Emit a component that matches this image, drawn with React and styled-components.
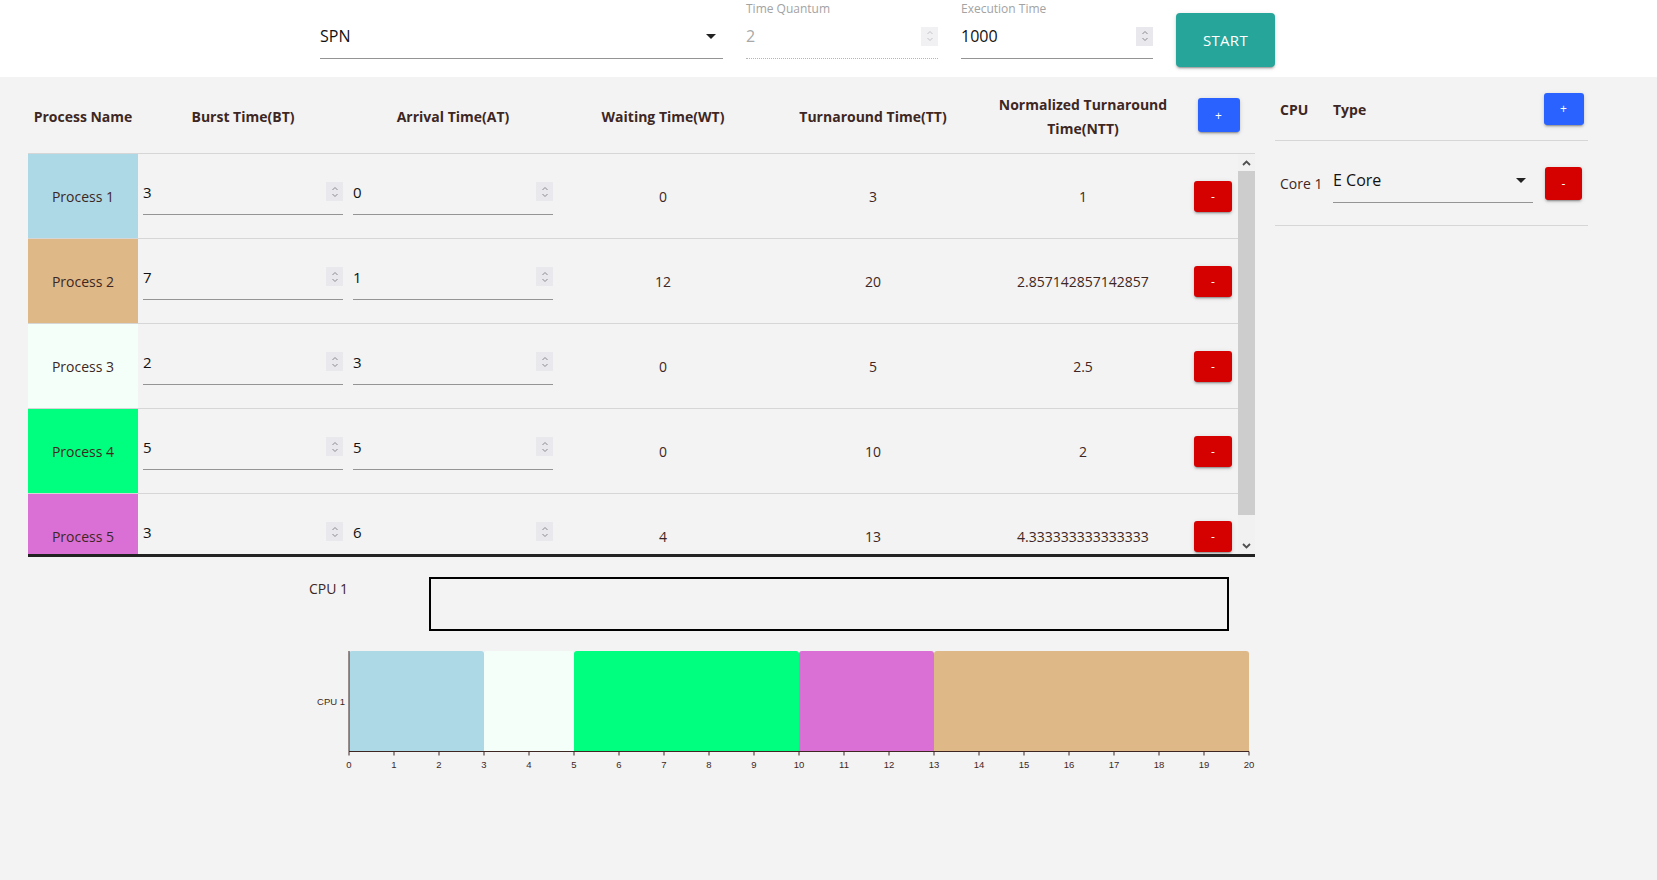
import React from "react";
import styled, { createGlobalStyle } from "styled-components";

const GlobalStyle = createGlobalStyle`
  * { box-sizing: border-box; }
  html, body { margin: 0; padding: 0; }
  body {
    background: #f3f3f3;
    font-family: "Open Sans", "Noto Sans", sans-serif;
    color: #3e2723;
    min-height: 100vh;
  }
  input { font-family: inherit; }
  input[type="number"]::-webkit-inner-spin-button,
  input[type="number"]::-webkit-outer-spin-button {
    -webkit-appearance: none;
    margin: 0;
  }
`;

const processes = [
  { name: "Process 1", color: "#add8e6", bt: 3, at: 0, wt: 0, tt: 3, ntt: "1" },
  { name: "Process 2", color: "#deb887", bt: 7, at: 1, wt: 12, tt: 20, ntt: "2.857142857142857" },
  { name: "Process 3", color: "#f5fffa", bt: 2, at: 3, wt: 0, tt: 5, ntt: "2.5" },
  { name: "Process 4", color: "#00ff7f", bt: 5, at: 5, wt: 0, tt: 10, ntt: "2" },
  { name: "Process 5", color: "#da70d6", bt: 3, at: 6, wt: 4, tt: 13, ntt: "4.333333333333333" },
];

const schedule = [
  { start: 0, end: 3, color: "#add8e6" },
  { start: 3, end: 5, color: "#f5fffa" },
  { start: 5, end: 10, color: "#00ff7f" },
  { start: 10, end: 13, color: "#da70d6" },
  { start: 13, end: 20, color: "#deb887" },
];

const ROW_H = 85;
const VIEW_H = 400;
const ARROW_H = 17;

/* ---------- top bar ---------- */

const TopBar = styled.div`
  display: flex;
  align-items: flex-start;
  gap: 23px;
  height: 77px;
  padding-left: 320px;
  background: #fff;
`;

const Field = styled.div`
  width: ${(p) => p.$width}px;
  flex: none;
`;

const FieldLabel = styled.div`
  height: 17px;
  font-size: 12px;
  line-height: 17px;
  color: #a3a3a3;
`;

const InputRow = styled.div`
  display: flex;
  align-items: center;
  height: 35px;
  margin-top: ${(p) => p.$offset || 0}px;
  padding-bottom: 10px;
  border-bottom: 1px ${(p) => (p.$disabled ? "dotted #b5b5b5" : "solid #949494")};
`;

const TextInput = styled.input`
  flex: 1;
  min-width: 0;
  height: 24px;
  border: none;
  outline: none;
  background: transparent;
  padding: 0;
  font-size: ${(p) => p.$size || 16}px;
  color: ${(p) => (p.disabled ? "#a8a8a8" : "#111")};
`;

const SelectText = styled.div`
  flex: 1;
  font-size: 16px;
  line-height: 24px;
  color: #111;
`;

const SpinBox = styled.div`
  flex: none;
  width: 17px;
  height: 19px;
  display: flex;
  align-items: center;
  justify-content: center;
  background: ${(p) => (p.$disabled ? "#f1f1f4" : "#e9e9ed")};
`;

const StartButton = styled.button`
  flex: none;
  margin-top: 13px;
  width: 99px;
  height: 54px;
  border: none;
  border-radius: 4px;
  background: #26a69a;
  color: #fff;
  font-family: inherit;
  font-size: 15px;
  letter-spacing: 0.3px;
  box-shadow: 0 3px 1px -2px rgba(0, 0, 0, 0.2), 0 2px 2px 0 rgba(0, 0, 0, 0.14),
    0 1px 5px 0 rgba(0, 0, 0, 0.12);
`;

/* ---------- main ---------- */

const Main = styled.div`
  display: flex;
  align-items: flex-start;
  gap: 20px;
  padding-left: 28px;
`;

const LeftColumn = styled.div`
  width: 1227px;
  flex: none;
`;

const HeadGrid = styled.div`
  display: grid;
  grid-template-columns: 110px 210px 210px 210px 210px 210px 1fr;
  align-items: center;
  height: 77px;
  border-bottom: 1px solid #d6d6d6;
`;

const HeadCell = styled.div`
  display: flex;
  justify-content: center;
  padding-top: ${(p) => (p.$button ? 0 : 3)}px;
  padding-right: ${(p) => (p.$button ? 6 : 0)}px;
  text-align: center;
  font-size: 14px;
  font-weight: 700;
  line-height: 23.5px;
`;

const BodyFrame = styled.div`
  display: flex;
  height: ${VIEW_H + 3}px;
  border-bottom: 3px solid #222;
`;

const RowsViewport = styled.div`
  flex: 1;
  height: ${VIEW_H}px;
  overflow: hidden;
`;

const Row = styled.div`
  display: grid;
  grid-template-columns: 110px 210px 210px 210px 210px 210px 50px;
  align-items: center;
  height: ${ROW_H}px;
  border-bottom: 1px solid #d6d6d6;
`;

const NameCell = styled.div`
  align-self: stretch;
  display: flex;
  align-items: center;
  justify-content: center;
  background: ${(p) => p.$color};
  font-size: 14px;
`;

const InputCell = styled.div`
  padding: 2px 5px 0;
`;

const ValueCell = styled.div`
  text-align: center;
  font-size: 14px;
`;

const ActionCell = styled.div`
  display: flex;
  justify-content: center;
  padding-left: ${(p) => p.$pl || 0}px;
`;

const ActionButton = styled.button`
  width: ${(p) => p.$w || 38}px;
  height: ${(p) => p.$h || 31}px;
  padding: 0;
  border: none;
  border-radius: 3px;
  background: ${(p) => (p.$add ? "#2962ff" : "#d50000")};
  color: #fff;
  font-family: inherit;
  font-size: 12px;
  box-shadow: 0 3px 1px -2px rgba(0, 0, 0, 0.2), 0 2px 2px 0 rgba(0, 0, 0, 0.14),
    0 1px 5px 0 rgba(0, 0, 0, 0.12);
`;

const Scrollbar = styled.div`
  width: 17px;
  height: ${VIEW_H}px;
  display: flex;
  flex-direction: column;
  background: #f1f1f1;
`;

const ScrollArrow = styled.div`
  height: ${ARROW_H}px;
  display: flex;
  align-items: center;
  justify-content: center;
  flex: none;
`;

const ScrollThumb = styled.div`
  flex: none;
  background: #cdcdcd;
`;

const ScrollGap = styled.div`
  flex: 1;
`;

/* ---------- queue + chart ---------- */

const QueueRow = styled.div`
  display: flex;
  align-items: flex-start;
  margin-top: 20px;
  padding-left: 281px;
`;

const QueueLabel = styled.div`
  width: 120px;
  margin-top: 2px;
  font-size: 14px;
  line-height: 20px;
`;

const QueueBox = styled.div`
  width: 800px;
  height: 54px;
  border: 2px solid #000;
`;

const ChartWrap = styled.div`
  margin: 14px 0 0 272px;
  width: 960px;
  height: 132px;
`;

/* ---------- cpu panel ---------- */

const CpuPanel = styled.div`
  width: 313px;
  flex: none;
`;

const CpuGrid = styled.div`
  display: grid;
  grid-template-columns: 58px 200px 1fr;
  align-items: center;
  height: ${(p) => (p.$head ? 64 : 85)}px;
  border-bottom: 1px solid #d6d6d6;
`;

const CpuHeadText = styled.div`
  padding-top: 2px;
  padding-left: ${(p) => (p.$first ? 5 : 0)}px;
  font-size: 14px;
  font-weight: 700;
`;

const CoreName = styled.div`
  padding-left: 5px;
  font-size: 14px;
`;

const CpuSelect = styled.div`
  margin-top: 4px;
`;

/* ---------- drawings ---------- */

function Spinner({ disabled }) {
  const c = disabled ? "#c4c4c8" : "#8a8a8f";
  return (
    <SpinBox $disabled={disabled}>
      <svg width="8" height="14" viewBox="0 0 8 14">
        <path d="M1.5 5 L4 2.5 L6.5 5 M1.5 9 L4 11.5 L6.5 9" fill="none" stroke={c} strokeWidth="1" />
      </svg>
    </SpinBox>
  );
}

function Caret() {
  return (
    <svg width="24" height="24" viewBox="0 0 24 24">
      <path d="M7 10l5 5 5-5z" fill="#222" />
    </svg>
  );
}

function Chevron({ up }) {
  return (
    <svg width="9" height="6" viewBox="0 0 9 6">
      <path
        d={up ? "M1 5 L4.5 1.5 L8 5" : "M1 1 L4.5 4.5 L8 1"}
        fill="none"
        stroke="#505050"
        strokeWidth="1.8"
      />
    </svg>
  );
}

function NumberField({ value, size, disabled }) {
  return (
    <InputRow $disabled={disabled}>
      <TextInput type="number" defaultValue={value} $size={size} disabled={disabled} />
      <Spinner disabled={disabled} />
    </InputRow>
  );
}

function GanttChart() {
  const x0 = 49;
  const unit = 45;
  const top = 6;
  const base = 106.5;
  const r = 3;
  const font = "Liberation Sans, Arial, sans-serif";
  return (
    <svg width="960" height="132" viewBox="0 0 960 132">
      {schedule.map((s) => {
        const x = x0 + s.start * unit;
        const w = (s.end - s.start) * unit;
        const d = `M${x} ${base} V${top + r} Q${x} ${top} ${x + r} ${top} H${x + w - r} Q${x + w} ${top} ${x + w} ${top + r} V${base} Z`;
        return <path key={s.start} d={d} fill={s.color} />;
      })}
      <line x1={x0} y1={top} x2={x0} y2={base} stroke="#3e2723" strokeWidth="1" />
      <line x1={x0} y1={base} x2={x0 + 20 * unit} y2={base} stroke="#3e2723" strokeWidth="1" />
      <text x="45" y="57" textAnchor="end" dominantBaseline="middle" fontSize="9.5" fill="#3e2723" fontFamily={font}>
        CPU 1
      </text>
      {Array.from({ length: 21 }, (_, i) => (
        <g key={i}>
          <line x1={x0 + i * unit} y1={base} x2={x0 + i * unit} y2={base + 4} stroke="#3e2723" strokeWidth="1" />
          <text
            x={x0 + i * unit}
            y="120"
            textAnchor="middle"
            dominantBaseline="middle"
            fontSize="9.5"
            fill="#3e2723"
            fontFamily={font}
          >
            {i}
          </text>
        </g>
      ))}
    </svg>
  );
}

export default function App() {
  const track = VIEW_H - ARROW_H * 2;
  const thumb = Math.round((track * VIEW_H) / (processes.length * ROW_H));

  return (
    <>
      <GlobalStyle />
      <TopBar>
        <Field $width={403}>
          <FieldLabel />
          <InputRow $offset={7}>
            <SelectText>SPN</SelectText>
            <Caret />
          </InputRow>
        </Field>
        <Field $width={192}>
          <FieldLabel>Time Quantum</FieldLabel>
          <InputRow $offset={7} $disabled>
            <TextInput type="number" defaultValue={2} disabled />
            <Spinner disabled />
          </InputRow>
        </Field>
        <Field $width={192}>
          <FieldLabel>Execution Time</FieldLabel>
          <InputRow $offset={7}>
            <TextInput type="number" defaultValue={1000} />
            <Spinner />
          </InputRow>
        </Field>
        <StartButton>START</StartButton>
      </TopBar>

      <Main>
        <LeftColumn>
          <HeadGrid>
            <HeadCell>Process Name</HeadCell>
            <HeadCell>Burst Time(BT)</HeadCell>
            <HeadCell>Arrival Time(AT)</HeadCell>
            <HeadCell>Waiting Time(WT)</HeadCell>
            <HeadCell>Turnaround Time(TT)</HeadCell>
            <HeadCell>
              Normalized Turnaround
              <br />
              Time(NTT)
            </HeadCell>
            <HeadCell $button>
              <ActionButton $add $w={42} $h={34}>+</ActionButton>
            </HeadCell>
          </HeadGrid>

          <BodyFrame>
            <RowsViewport>
              {processes.map((p) => (
                <Row key={p.name}>
                  <NameCell $color={p.color}>{p.name}</NameCell>
                  <InputCell>
                    <NumberField value={p.bt} size={15} />
                  </InputCell>
                  <InputCell>
                    <NumberField value={p.at} size={15} />
                  </InputCell>
                  <ValueCell>{p.wt}</ValueCell>
                  <ValueCell>{p.tt}</ValueCell>
                  <ValueCell>{p.ntt}</ValueCell>
                  <ActionCell>
                    <ActionButton>-</ActionButton>
                  </ActionCell>
                </Row>
              ))}
            </RowsViewport>
            <Scrollbar>
              <ScrollArrow>
                <Chevron up />
              </ScrollArrow>
              <ScrollThumb style={{ height: thumb }} />
              <ScrollGap />
              <ScrollArrow>
                <Chevron />
              </ScrollArrow>
            </Scrollbar>
          </BodyFrame>

          <QueueRow>
            <QueueLabel>CPU 1</QueueLabel>
            <QueueBox />
          </QueueRow>

          <ChartWrap>
            <GanttChart />
          </ChartWrap>
        </LeftColumn>

        <CpuPanel>
          <CpuGrid $head>
            <CpuHeadText $first>CPU</CpuHeadText>
            <CpuHeadText>Type</CpuHeadText>
            <ActionCell $pl={6}>
              <ActionButton $add $w={40} $h={32}>+</ActionButton>
            </ActionCell>
          </CpuGrid>
          <CpuGrid>
            <CoreName>Core 1</CoreName>
            <CpuSelect>
              <InputRow>
                <SelectText>E Core</SelectText>
                <Caret />
              </InputRow>
            </CpuSelect>
            <ActionCell $pl={6}>
              <ActionButton $w={37} $h={33}>-</ActionButton>
            </ActionCell>
          </CpuGrid>
        </CpuPanel>
      </Main>
    </>
  );
}
